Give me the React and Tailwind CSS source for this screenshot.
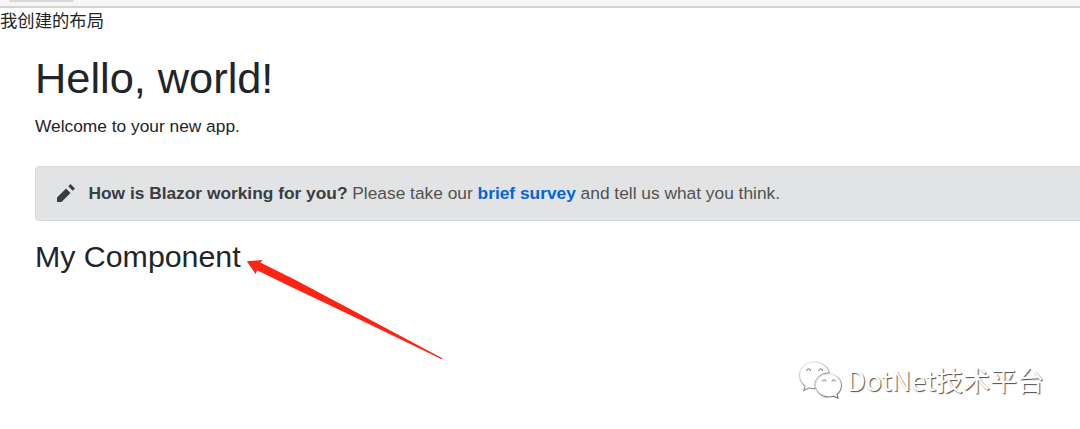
import React from "react";

function PencilIcon() {
  return (
    <svg className="relative -top-px h-[18px] w-[18px] shrink-0" viewBox="0 0 8 8" fill="#383d41" aria-hidden="true">
      <path d="M6 0l-1 1 2 2 1-1-2-2zm-2 2l-4 4v2h2l4-4-2-2z" />
    </svg>
  );
}

function Arrow() {
  return (
    <svg className="absolute left-[246px] top-[257px] h-[104px] w-[198px]" viewBox="246 257 198 104" aria-hidden="true">
      <path d="M246.8 261.2L262.8 260L260.3 262.5L294 279.2L344 305.8L442.3 358.3L441.8 359.3L344 312L294 288.2L257 270.3L255.8 274.3Z" fill="#ff2314" />
    </svg>
  );
}

function ChatLogo() {
  return (
    <svg className="h-[42px] w-[46px] shrink-0" viewBox="798 358 46 42" fill="none" aria-hidden="true">
      <defs>
        <linearGradient id="edge" x1="0" y1="0" x2="0.5" y2="1">
          <stop offset="0" stopColor="#ececec" />
          <stop offset="0.45" stopColor="#cfcfcf" />
          <stop offset="1" stopColor="#777" />
        </linearGradient>
      </defs>
      <path d="M814.5 361C806 361 799.5 366.8 799.5 374.3C799.5 378.8 801.7 382.5 805 385L803.8 389.6L809.2 386.8C811 387.5 813 387.8 815.5 387.7C814 379 820 372 829.5 371.8C828 365.5 822 361 814.5 361Z" fill="#fff" stroke="url(#edge)" strokeWidth="1.2" />
      <path d="M815 384.5C815 378 821 372.3 828.5 372.3" stroke="#999" strokeWidth="1.3" />
      <path d="M828.5 373C821.2 373 815.5 378 815.5 384.3C815.5 390.7 821.2 396 828.5 396C830.3 396 832 395.7 833.5 395.2L838 397.3L837.2 393.2C840 391 841.5 387.8 841.5 384.3C841.5 378 835.8 373 828.5 373Z" fill="#fff" stroke="url(#edge)" strokeWidth="1.2" />
      <g stroke="#999" strokeWidth="1.1">
        <path d="M807 370.3a1.8 1.8 0 1 1 3.4 0M819 370.3a1.8 1.8 0 1 1 3.4 0" />
        <path d="M822.8 380.6a1.5 1.5 0 1 1 2.9 0M832.2 380.6a1.5 1.5 0 1 1 2.9 0" />
      </g>
    </svg>
  );
}

function Watermark() {
  return (
    <div className="absolute left-[798px] top-[358px] flex items-center gap-[3px]">
      <ChatLogo />
      <span className="whitespace-nowrap pt-px font-['Noto_Sans_CJK_SC',sans-serif] text-[27px] leading-[42px] text-white [text-shadow:1px_1px_1px_rgba(0,0,0,0.7)]">
        DotNet技术平台
      </span>
    </div>
  );
}

export default function App() {
  return (
    <div className="relative h-[429px] w-full overflow-hidden bg-white font-['Liberation_Sans','Noto_Sans_CJK_SC',sans-serif] text-[17.33px] leading-[26px] text-[#212529]">
      <div className="h-2 border-b-2 border-[#d3d3d3] bg-[#f6f6f6]">
        <div className="ml-[9px] h-[2px] w-[65px] rounded-b-sm bg-[#d8d8d8]" />
      </div>
      <div className="h-[26px] font-['Noto_Sans_CJK_SC',sans-serif] leading-[24px]">我创建的布局</div>
      <main className="pl-[35px]">
        <h1 className="mt-[19px] h-[52px] whitespace-nowrap text-[43.33px] leading-[51px]">Hello, world!</h1>
        <p className="mt-[9px] h-[26px] whitespace-nowrap leading-[25px]">Welcome to your new app.</p>
        <div className="mt-[26px] -mr-2 flex h-[55px] items-center gap-[14px] rounded-[4px] border border-[#d6d8db] bg-[#e2e3e5] pl-[21px] text-[#383d41]">
          <PencilIcon />
          <div className="-ml-[0.5px] whitespace-nowrap pb-[2px]">
            <strong>How is Blazor working for you?</strong>{" "}
            <span className="text-[#50524f]">
              Please take our <a className="font-bold text-[#0366d6]">brief survey</a> and tell us what you think.
            </span>
          </div>
        </div>
        <h3 className="mt-[18px] whitespace-nowrap text-[30.33px] leading-[36px]">My Component</h3>
      </main>
      <Arrow />
      <Watermark />
    </div>
  );
}
